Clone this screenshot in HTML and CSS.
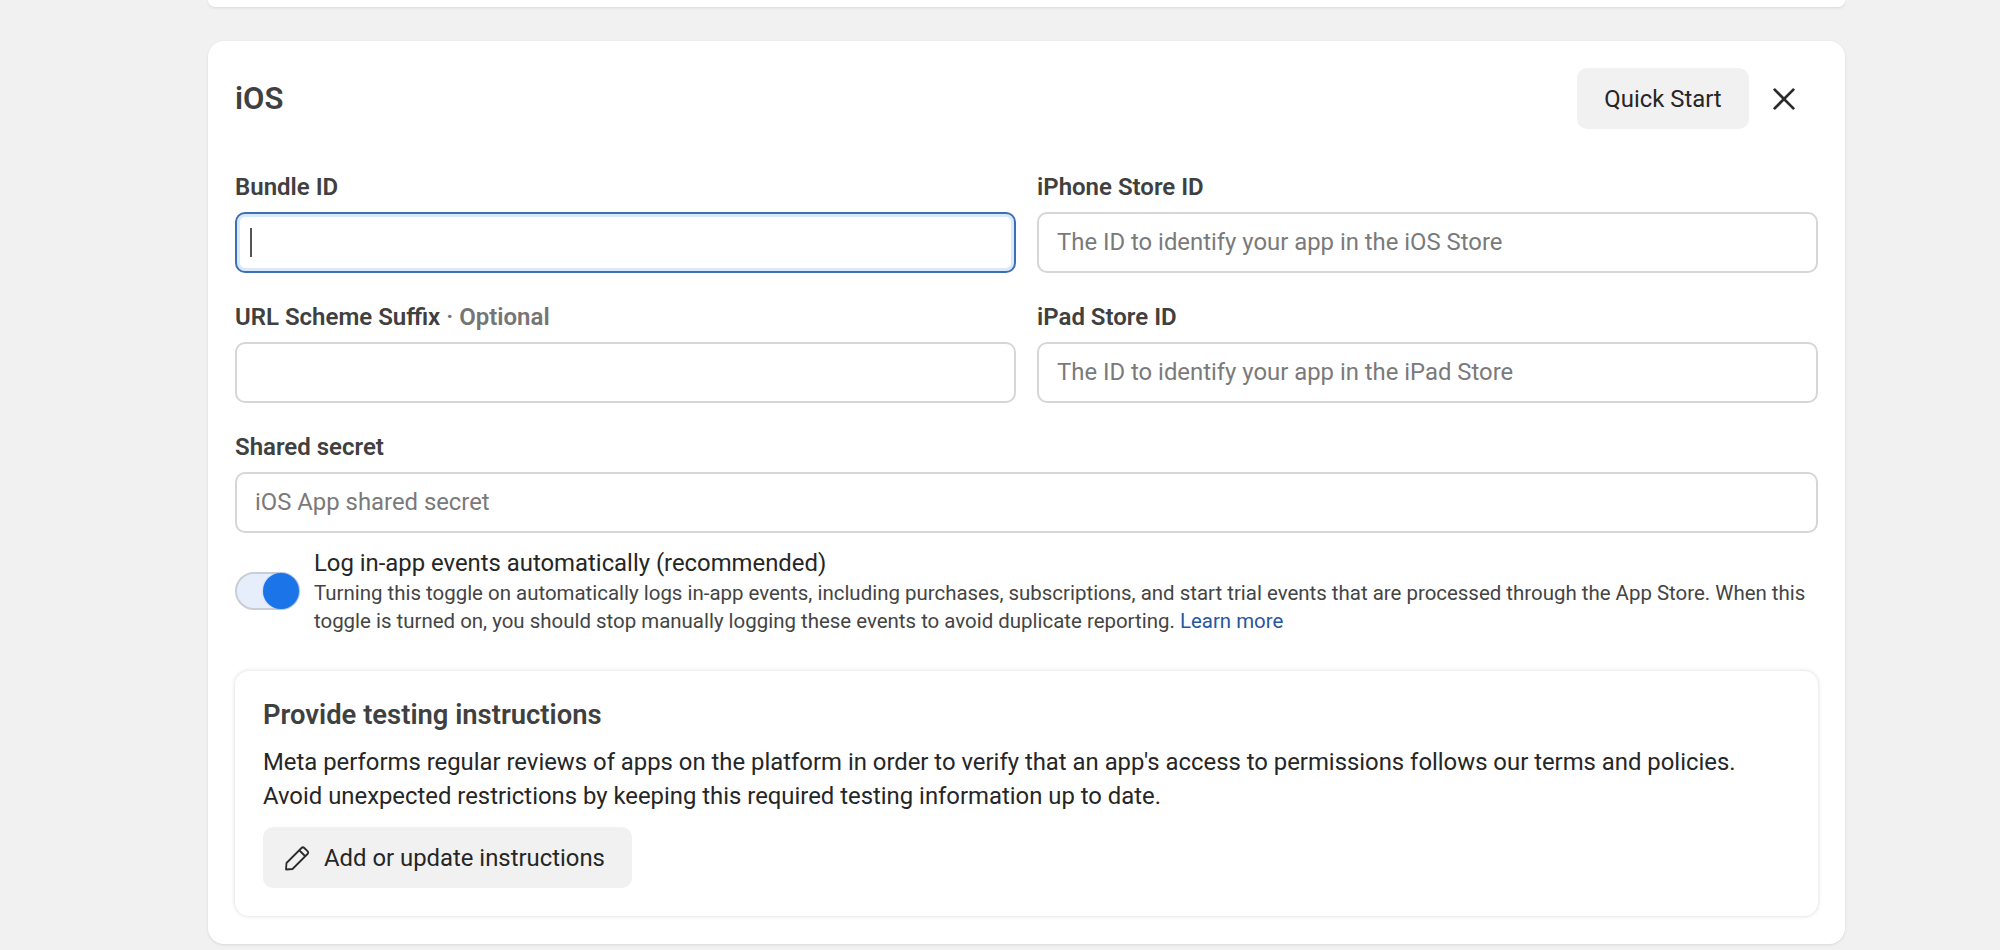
FILE: index.html
```html
<!DOCTYPE html>
<html lang="en">
<head>
<meta charset="utf-8">
<title>iOS settings</title>
<link rel="stylesheet" href="styles.css">
</head>
<body>
<div class="page">
  <div class="card-prev"></div>
  <section class="card">
    <header class="card-head">
      <h2 class="title">iOS</h2>
      <div class="head-actions">
        <button class="btn btn-quick">Quick Start</button>
        <button class="close" aria-label="Close">
          <svg viewBox="0 0 24 24" width="24" height="24"><path d="M1.9 1.9 22.1 22.1M22.1 1.9 1.9 22.1" fill="none" stroke="#2b2b2b" stroke-width="2.7"/></svg>
        </button>
      </div>
    </header>
    <div class="grid">
      <div class="field">
        <label class="label">Bundle ID</label>
        <div class="input focused"><span class="caret"></span></div>
      </div>
      <div class="field">
        <label class="label">iPhone Store ID</label>
        <div class="input"><span class="ph">The ID to identify your app in the iOS Store</span></div>
      </div>
      <div class="field">
        <label class="label">URL Scheme Suffix <span class="opt">· Optional</span></label>
        <div class="input"></div>
      </div>
      <div class="field">
        <label class="label">iPad Store ID</label>
        <div class="input"><span class="ph">The ID to identify your app in the iPad Store</span></div>
      </div>
      <div class="field wide">
        <label class="label">Shared secret</label>
        <div class="input"><span class="ph">iOS App shared secret</span></div>
      </div>
    </div>
    <div class="toggle-row">
      <div class="toggle"><span class="knob"></span></div>
      <div class="toggle-text">
        <div class="toggle-title">Log in-app events automatically (recommended)</div>
        <p class="toggle-desc">Turning this toggle on automatically logs in-app events, including purchases, subscriptions, and start trial events that are processed through the App Store. When this toggle is turned on, you should stop manually logging these events to avoid duplicate reporting. <a class="link" href="#">Learn more</a></p>
      </div>
    </div>
    <section class="inner">
      <h3 class="inner-title">Provide testing instructions</h3>
      <p class="inner-text">Meta performs regular reviews of apps on the platform in order to verify that an app's access to permissions follows our terms and policies.<br>Avoid unexpected restrictions by keeping this required testing information up to date.</p>
      <button class="btn btn-edit">
        <svg viewBox="0 0 26 26" width="26" height="26"><path d="M2 24.5 2.5 18 17.5 3a2 2 0 0 1 2.8 0l3.2 3.2a2 2 0 0 1 0 2.8L8.5 24Zm13-19.5 6 6" fill="none" stroke="#2b2b2b" stroke-width="1.8" stroke-linejoin="round"/></svg>
        Add or update instructions
      </button>
    </section>
  </section>
</div>
</body>
</html>
```
FILE: styles.css
```css
* { box-sizing: border-box; }
html, body { margin: 0; padding: 0; height: 950px; overflow: hidden; }
body { background: #f1f1f1; font-family: Roboto, "Liberation Sans", sans-serif; color: #262626; }
.page { width: 1637px; margin-left: 208px; }
.card-prev { height: 7px; background: #fff; border-radius: 0 0 14px 14px; box-shadow: 0 1px 3px rgba(0,0,0,.1); }
.card { margin-top: 34px; height: 903px; padding: 27px; background: #fff; border-radius: 16px; box-shadow: 0 1px 3px rgba(0,0,0,.1); }
.card-head { display: flex; justify-content: space-between; align-items: center; height: 61px; }
.title { margin: 0; font-size: 31px; font-weight: 600; color: #404040; }
.head-actions { display: flex; align-items: center; }
.btn { display: flex; align-items: center; border: 0; border-radius: 10px; background: #f1f1f1; font-family: inherit; font-size: 23.86px; color: #262626; height: 61px; }
.btn-quick { width: 172px; justify-content: center; padding: 0; }
.close { display: flex; padding: 0; margin: 0 22px 0 23px; border: 0; background: none; }
.grid { display: grid; grid-template-columns: 1fr 1fr; column-gap: 21px; margin-top: 40px; }
.field { display: flex; flex-direction: column; padding-bottom: 26px; }
.wide { grid-column: 1 / 3; }
.label { height: 43px; padding-top: 3px; font-size: 24px; line-height: 30px; font-weight: 600; color: #404040; }
.opt { color: #757575; }
.input { display: flex; align-items: center; height: 61px; padding: 0 18px 2px 18px; border: 2px solid #d6d6d6; border-radius: 10px; font-size: 23.86px; background: #fff; }
.ph { color: #7a7a7a; }
.focused { padding: 0 13px; border-color: #3d6fb5; box-shadow: inset 0 0 0 3px #d8e9fb; }
.caret { width: 2px; height: 29px; background: #555; }
.toggle-row { display: flex; align-items: flex-start; gap: 14px; margin-top: -11px; }
.toggle { position: relative; flex: none; width: 65px; height: 38px; margin-top: 24px; border: 2px solid #c9cdd6; border-radius: 19px; background: #e7eefb; }
.knob { position: absolute; top: -1px; right: -1px; width: 36px; height: 36px; border-radius: 50%; background: #1b74e8; box-shadow: 0 0 2px #8db8f2; }
.toggle-text { flex: 1; }
.toggle-title { font-size: 23.86px; line-height: 30px; }
.toggle-desc { margin: 1px 0 0; font-size: 20.44px; line-height: 28px; color: #444; }
.link { color: #2a55a0; text-decoration: none; }
.inner { height: 245px; margin-top: 36px; padding: 28px 28px 0; border-radius: 14px; background: #fff; box-shadow: 0 0 4px rgba(0,0,0,.16); }
.inner-title { margin: 0 0 14px; font-size: 27.4px; line-height: 32px; font-weight: 600; color: #404040; }
.inner-text { margin: 0 0 14px; font-size: 23.86px; line-height: 34px; }
.btn-edit { gap: 14px; width: 369px; padding: 0 21px; }
```
